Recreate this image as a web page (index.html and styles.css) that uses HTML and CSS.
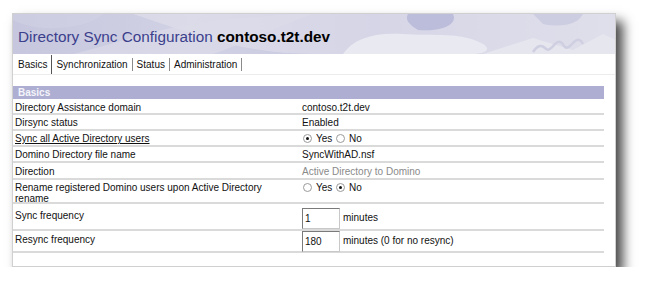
FILE: index.html
```html
<!DOCTYPE html>
<html>
<head>
<meta charset="utf-8">
<link rel="stylesheet" href="styles.css">
</head>
<body>
<div class="card">
  <div class="banner">
    <svg class="art" width="603" height="40" viewBox="0 0 603 40" preserveAspectRatio="none">
      <path d="M120 0 C180 20 230 40 300 40 L603 40 L603 0 Z" fill="#e2e2ec" opacity="0.55"/>
      <path d="M60 40 C110 28 150 10 230 4 C260 2 270 0 280 0 L300 0 C270 10 230 30 200 40 Z" fill="#dcdcea" opacity="0.6"/>
      <path d="M395 0 L440 0 C445 10 430 18 405 16 C395 10 392 5 395 0 Z" fill="#bcbcdb"/>
      <path d="M330 40 C340 25 360 18 390 20 C420 22 450 18 470 30 C480 36 470 40 460 40 Z" fill="#e9e9f1"/>
      <path d="M520 0 L570 0 C565 10 550 14 530 10 Z" fill="#cdcde2"/>
      <path d="M470 40 L520 24 L560 36 L590 20 L603 26 L603 40 Z" fill="#e6e6ef"/>
      <path d="M520 38 C524 32 528 30 532 34 C536 38 538 34 542 30 C546 26 549 28 551 32 C554 36 557 32 561 28 C565 24 568 26 570 30" fill="none" stroke="#cfcfe2" stroke-width="2.5"/>
      <path d="M0 0 L90 0 C80 10 60 15 30 14 C15 13 5 8 0 6 Z" fill="#d3d3e6" opacity="0.5"/>
    </svg>
    <h1 class="title">Directory Sync Configuration <b>contoso.t2t.dev</b></h1>
  </div>
  <div class="tabs">
    <span class="tab active">Basics</span><span class="tab">Synchronization</span><span class="tab">Status</span><span class="tab">Administration</span>
  </div>
  <div class="form">
    <div class="section">Basics</div>
    <div class="row h15"><div class="label">Directory Assistance domain</div><div class="val">contoso.t2t.dev</div></div>
    <div class="row"><div class="label">Dirsync status</div><div class="val">Enabled</div></div>
    <div class="row"><div class="label"><u>Sync all Active Directory users</u></div><div class="val"><span class="radio on"></span>Yes <span class="radio"></span>No</div></div>
    <div class="row"><div class="label">Domino Directory file name</div><div class="val">SyncWithAD.nsf</div></div>
    <div class="row h17"><div class="label">Direction</div><div class="val muted">Active Directory to Domino</div></div>
    <div class="row tall"><div class="label">Rename registered Domino users upon Active Directory<br>rename</div><div class="val"><span class="radio"></span>Yes <span class="radio on"></span>No</div></div>
    <div class="row inrow sync"><div class="label">Sync frequency</div><div class="val"><span class="input">1</span>minutes</div></div>
    <div class="row inrow resync"><div class="label">Resync frequency</div><div class="val"><span class="input">180</span>minutes (0 for no resync)</div></div>
  </div>
</div>
</body>
</html>
```
FILE: styles.css
```css
html, body { margin: 0; padding: 0; background: #fff; }
body { font-family: "Liberation Sans", Arial, sans-serif; font-size: 10px; color: #111; }
.card {
  margin: 13px 0 0 12px;
  width: 604px;
  height: 254px;
  background: #fff;
  border: 1px solid #d0d0d0;
  box-sizing: border-box;
  box-shadow: 7px 8px 11px rgba(0,0,0,0.72);
}
.banner {
  position: relative;
  height: 40px;
  background: linear-gradient(90deg, #c6c6de 0%, #d2d2e5 30%, #c6c6df 60%, #dcdce9 100%);
  overflow: hidden;
}
.art { position: absolute; left: 0; top: 0; }
.title {
  position: relative;
  margin: 0;
  padding: 14px 0 0 5px;
  font-size: 15.3px;
  font-weight: normal;
  color: #3b3f8c;
  line-height: 18px;
  white-space: nowrap;
}
.title b { color: #000; font-weight: bold; }
.tabs {
  display: flex;
  height: 20px;
  align-items: center;
  padding-left: 2px;
  border-bottom: 1px solid #ececec;
  font-size: 10px;
}
.tab { padding: 0 4px 0 3px; border-right: 1px solid #8a8a8a; line-height: 13px; margin-right: 1px; }
.tab.active { border-right: 1px solid #555; line-height: 19px; align-self: flex-end; }
.form {
  margin-top: 11px;
  width: 591px;
}
.section {
  background: #aeaed2;
  color: #f4f4fa;
  font-weight: bold;
  height: 13px;
  line-height: 13px;
  border-bottom: 1px solid #fff;
  padding-left: 5px;
}
.row {
  display: flex;
  height: 14px;
  align-items: center;
  border-bottom: 2px solid #dadada;
}
.row > div { padding-top: 1px; }
.row.h15 { height: 13px; }
.row.h17 { height: 15px; }
.label { width: 285px; padding-left: 2px; }
.val { padding-left: 2px; }
.muted { color: #8a8a8a; }
.row.tall { height: 22px; align-items: flex-start; }
.tall .label { line-height: 11px; padding-top: 2px; }
.tall .val { padding-top: 2px; }
.row.inrow { align-items: flex-start; }
.row.sync { height: 25px; }
.row.sync .label { padding-top: 6px; }
.row.sync .val { padding-top: 4px; }
.row.resync { height: 20px; }
.row.resync .label { padding-top: 3px; }
.row.resync .val { padding-top: 0; }
.radio {
  display: inline-block;
  width: 7px; height: 7px;
  border: 1px solid #9a9a9a;
  border-radius: 50%;
  margin: 0 4px 0 1px;
  vertical-align: -1px;
  position: relative;
  background: #fff;
}
.radio.on::after {
  content: "";
  position: absolute;
  left: 2px; top: 2px;
  width: 3px; height: 3px;
  border-radius: 50%;
  background: #111;
}
.input {
  display: inline-block;
  width: 34px;
  height: 19px;
  border: 1px solid #7a7a7a;
  border-right-color: #c8c8c8;
  border-bottom-color: #c8c8c8;
  padding-left: 2px;
  line-height: 19px;
  margin-right: 3px;
  vertical-align: middle;
}
```
